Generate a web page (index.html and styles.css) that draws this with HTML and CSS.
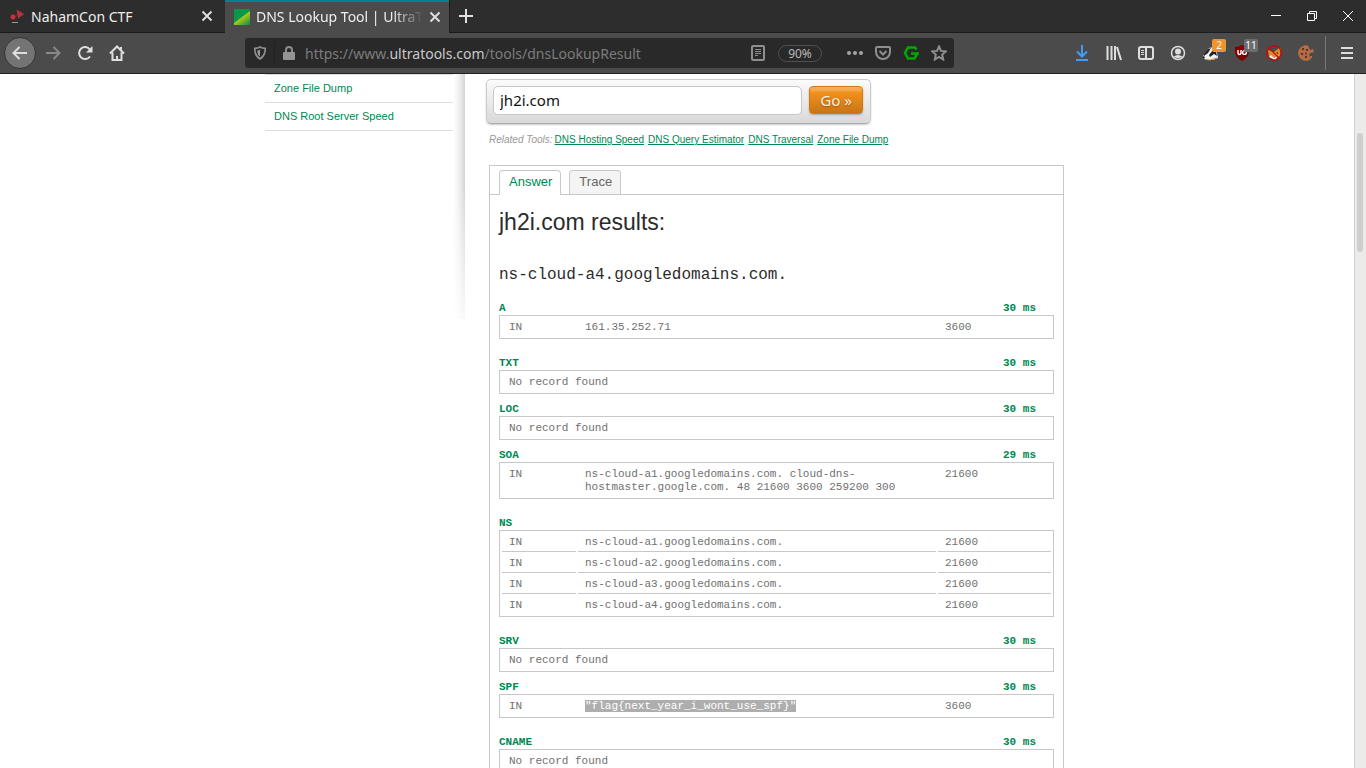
FILE: index.html
```html
<!DOCTYPE html>
<html lang="en">
<head>
<meta charset="utf-8">
<title>DNS Lookup Tool | UltraTools</title>
<link rel="stylesheet" href="styles.css">
</head>
<body>
<header class="browser">
  <div class="tabstrip">
    <div class="tab">
      <svg class="favicon" viewBox="0 0 16 16"><path d="M7.500 1.500L15 6l-6 4.500z" fill="#b8343c"/><circle cx="4" cy="9" r="2.500" fill="#c8323e"/><path d="M6 8l3-1" stroke="#822"/><path d="M3 14.500h6" stroke="#999"/></svg>
      <span class="tab-title">NahamCon CTF</span>
      <button class="bare" aria-label="Close NahamCon CTF"><svg class="close" viewBox="0 0 12 12"><path d="M1.500 1.500l9 9m0-9l-9 9"/></svg></button>
    </div>
    <div class="tab tab-current">
      <svg class="favicon" viewBox="0 0 16 16"><defs><linearGradient id="leaf" x1="0.300" y1="0.300" x2="0.900" y2="1"><stop offset="0" stop-color="#d4dc12"/><stop offset="0.300" stop-color="#a5c81c"/><stop offset="1" stop-color="#16903e"/></linearGradient></defs><path d="M0 0h16v16H0z" fill="#0a9648"/><path d="M0 14L16 2v14H0z" fill="url(#leaf)"/></svg>
      <span class="tab-title fade">DNS Lookup Tool | UltraT</span>
      <button class="bare" aria-label="Close DNS Lookup Tool"><svg class="close" viewBox="0 0 12 12"><path d="M1.500 1.500l9 9m0-9l-9 9"/></svg></button>
    </div>
    <button class="bare new-tab" aria-label="New tab"><svg class="s16" viewBox="0 0 16 16"><path d="M8 1v14M1 8h14" stroke="#e0e0e0" stroke-width="2"/></svg></button>
    <div class="window-buttons">
      <button class="bare" aria-label="Minimize"><svg class="s12" viewBox="0 0 12 12"><path d="M1 5.500h10" stroke="#fff"/></svg></button>
      <button class="bare" aria-label="Restore"><svg class="s12" viewBox="0 0 12 12"><path d="M1.500 3.500h7v7h-7zM3.500 3.500v-2h7v7h-2" stroke="#fff"/></svg></button>
      <button class="bare" aria-label="Close window"><svg class="s12" viewBox="0 0 12 12"><path d="M1 1l10 10M11 1L1 11" stroke="#fff"/></svg></button>
    </div>
  </div>
  <nav class="toolbar" aria-label="Browser toolbar">
    <div class="nav-buttons">
      <button class="bare back" aria-label="Back"><svg class="s16" viewBox="0 0 16 16"><path d="M15 8H2M7.500 2L1.500 8l6 6" class="bold"/></svg></button>
      <button class="bare dim" aria-label="Forward"><svg class="s16" viewBox="0 0 16 16"><path d="M1 8h13M8.500 2l6 6-6 6" class="bold"/></svg></button>
      <button class="bare" aria-label="Reload"><svg class="s16" viewBox="0 0 16 16"><path d="M13 11.500A6 6 0 1 1 13 4.500" class="bold"/><path d="M15.500 1v6.500H9z" fill="#dedede" stroke="none"/></svg></button>
      <button class="bare" aria-label="Home"><svg class="s16" viewBox="0 0 16 16"><path d="M1 8.500l7-7 7 7M3.500 7.500V15h9V7.500" class="bold"/><path d="M8 15v-4" class="bold"/><path d="M12 2v3" class="bold"/></svg></button>
    </div>
    <div class="urlbar">
      <svg class="s14" viewBox="0 0 14 16"><path d="M7 1.200C9 2.300 11 2.700 13 2.700c0 6-1 9.500-6 12-5-2.500-6-6-6-12 2 0 4-.4 6-1.500z" stroke-width="2"/><path d="M7 4v8C4.500 10.500 4 8 4 5 5 5 6 4.700 7 4z" fill="#999" stroke="none"/></svg>
      <span class="url-divider"></span>
      <svg class="s14 lock" viewBox="0 0 12 14"><path d="M3 7V4a3 3 0 0 1 6 0v3" stroke-width="2"/><rect y="6" width="12" height="8" rx="1" fill="#949494" stroke="none"/></svg>
      <p class="url">https://www.<span class="host">ultratools.com</span>/tools/dnsLookupResult</p>
      <button class="bare reader" aria-label="Reader view"><svg class="s16" viewBox="0 0 16 16"><rect x="2" y="1" width="12" height="14" rx="1" stroke-width="2"/><path d="M5 4.500h6M5 6.500h6M5 8.500h6M5 10.500h3"/></svg></button>
      <button class="zoom">90%</button>
      <div class="page-actions">
        <button class="bare" aria-label="Page actions"><svg class="s16" viewBox="0 0 16 16"><g fill="#a4a4a4" stroke="none"><circle cx="2" cy="8" r="2"/><circle cx="8" cy="8" r="2"/><circle cx="14" cy="8" r="2"/></g></svg></button>
        <button class="bare" aria-label="Save to Pocket"><svg class="s16" viewBox="0 0 16 16"><path d="M2 2h12q1 0 1 1v4a7 7 0 0 1-14 0V3q0-1 1-1z" stroke-width="2"/><path d="M4.500 6L8 9.500 11.500 6" stroke-width="2"/></svg></button>
        <button class="bare" aria-label="Grammar"><svg class="s16" viewBox="0 0 16 16"><path d="M13.500 4.500L12 2.500H5L2 8l3 5.500h6.500L14 9M16 8.500H8" stroke="#00a800" stroke-width="2.600"/></svg></button>
        <button class="bare" aria-label="Bookmark"><svg class="s16" viewBox="0 0 16 16"><path d="M8 1.500l2 4.400 4.800.5-3.600 3.200 1 4.900L8 12l-4.200 2.500 1-4.900L1.200 6.400 6 5.900z" stroke-width="2"/></svg></button>
      </div>
    </div>
    <div class="extensions">
      <button class="bare" aria-label="Downloads"><svg class="s16" viewBox="0 0 16 16"><path d="M8 0v11M3 6.500l5 5 5-5M2 15h12" stroke="#409cf5" stroke-width="2"/></svg></button>
      <button class="bare" aria-label="Library"><svg class="s16" viewBox="0 0 16 16"><path d="M1.500 1v14M5.500 1v14M9 1v14M11 2l4 13" stroke-width="2"/></svg></button>
      <button class="bare" aria-label="Sidebars"><svg class="s16" viewBox="0 0 16 16"><rect x="1" y="2" width="14" height="12" rx="2" stroke-width="2"/><path d="M8 2v12" stroke-width="2"/><path d="M3 5.500h3M3 7.500h3M3 9.500h3"/></svg></button>
      <button class="bare" aria-label="Account"><svg class="s16" viewBox="0 0 16 16"><circle cx="8" cy="8" r="6.500" stroke-width="1.500"/><circle cx="8" cy="6.500" r="3" fill="#dedede" stroke="none"/><path d="M3.500 11.500q4.500-3 9 0Q8 15 3.500 11.500z" fill="#dedede" stroke="none"/></svg></button>
      <button class="bare badged" aria-label="Privacy Badger"><svg class="s16" viewBox="0 0 16 16"><path d="M0 13L3 8l4-5 5-1 3 6 1 5-5 2H5z" fill="#f2f2f2" stroke="none"/><path d="M2 9l4-5 3-1-3 5-4 3z" fill="#222" stroke="none"/><path d="M7 10l4-5 3 2 1 4-3-2-4 3z" fill="#222" stroke="none"/><path d="M0 12l2-1 1 2-2 1z" fill="#222" stroke="none"/><path d="M4 14.500l4 .5 7-2" stroke="#c98c55"/></svg><span class="badge">2</span></button>
      <button class="bare badged" aria-label="uBlock Origin"><svg class="s16" viewBox="0 0 16 16"><path d="M8 0q3 2 7 2c0 7 0 10-7 14C1 12 1 9 1 2q4 0 7-2z" fill="#800000" stroke="none"/><path d="M4 5v3.500q1.500 2 3 0V5" stroke="#fff" stroke-width="1.400"/><circle cx="10.500" cy="7.500" r="1.900" stroke="#fff" stroke-width="1.400"/></svg><span class="badge badge-gray">11</span></button>
      <button class="bare" aria-label="FoxyProxy"><svg class="s16" viewBox="0 0 16 16"><path d="M2 5l3 1 3 1 5-4 2 1-1 7-5 3-6-2z" fill="#df882c" stroke="none"/><path d="M3 12l2-2 3 3 4-2-3 4z" fill="#eee" stroke="none"/><path d="M10 8l2-1v2z" fill="#5b2b10" stroke="none"/><circle cx="8" cy="8" r="7.200" stroke="#d40000" stroke-width="1.200"/><path d="M3 3l10 10" stroke="#d40000" stroke-width="1.200"/></svg></button>
      <button class="bare" aria-label="Cookies"><svg class="s16" viewBox="0 0 16 16"><path d="M10 0.500A7.800 7.800 0 1 0 13 14l-2-3 1-3 4-1-1-3-3 1z" fill="#b56d48" stroke="none"/><g fill="#6a3320" stroke="none"><circle cx="5" cy="4" r="1.200"/><circle cx="9" cy="5" r="1.200"/><circle cx="4" cy="9" r="1.300"/><circle cx="8" cy="12" r="1.200"/><circle cx="8" cy="8.500" r="1"/></g><path d="M12 11h2v2h-2z" fill="#b56d48" stroke="none"/></svg></button>
    </div>
    <button class="bare menu" aria-label="Menu"><svg class="s14" viewBox="0 0 14 14"><path d="M1 2h12M1 7h12M1 12h12" stroke-width="2"/></svg></button>
  </nav>
</header>

<div class="viewport">
  <div class="page">
    <aside class="side">
      <ul class="side-links">
        <li><a href="#">Zone File Dump</a></li>
        <li><a href="#">DNS Root Server Speed</a></li>
      </ul>
      <div class="side-shadow"></div>
    </aside>
    <main class="content">
      <form class="lookup">
        <input class="domain" type="text" value="jh2i.com" aria-label="Domain name">
        <button class="go" type="button">Go »</button>
      </form>
      <p class="related"><em>Related Tools:</em> <a href="#">DNS Hosting Speed</a> <a href="#">DNS Query Estimator</a> <a href="#">DNS Traversal</a> <a href="#">Zone File Dump</a></p>
      <section class="results">
        <div class="result-tabs">
          <button class="result-tab selected">Answer</button>
          <button class="result-tab">Trace</button>
        </div>
        <div class="records">
          <h1>jh2i.com results:</h1>
          <h2>ns-cloud-a4.googledomains.com.</h2>

          <h3>A <span>30 ms</span></h3>
          <table class="full">
            <tr><td class="c-class">IN</td><td>161.35.252.71</td><td class="c-ttl">3600</td></tr>
          </table>
          <h3>TXT <span>30 ms</span></h3>
          <table><tr><td>No record found</td></tr></table>
          <h3>LOC <span>30 ms</span></h3>
          <table><tr><td>No record found</td></tr></table>
          <h3>SOA <span>29 ms</span></h3>
          <table class="full">
            <tr><td class="c-class">IN</td><td>ns-cloud-a1.googledomains.com. cloud-dns-hostmaster.google.com. 48 21600 3600 259200 300</td><td class="c-ttl">21600</td></tr>
          </table>
          <h3>NS</h3>
          <table class="full">
            <tr><td class="c-class">IN</td><td>ns-cloud-a1.googledomains.com.</td><td class="c-ttl">21600</td></tr>
            <tr><td>IN</td><td>ns-cloud-a2.googledomains.com.</td><td>21600</td></tr>
            <tr><td>IN</td><td>ns-cloud-a3.googledomains.com.</td><td>21600</td></tr>
            <tr><td>IN</td><td>ns-cloud-a4.googledomains.com.</td><td>21600</td></tr>
          </table>
          <h3>SRV <span>30 ms</span></h3>
          <table><tr><td>No record found</td></tr></table>
          <h3>SPF <span>30 ms</span></h3>
          <table class="full">
            <tr><td class="c-class">IN</td><td><mark>"flag{next_year_i_wont_use_spf}"</mark></td><td class="c-ttl">3600</td></tr>
          </table>
          <h3>CNAME <span>30 ms</span></h3>
          <table><tr><td>No record found</td></tr></table>
        </div>
      </section>
    </main>
  </div>
  <div class="scrollbar"><div class="thumb"></div></div>
</div>
</body>
</html>
```
FILE: styles.css
```css
* { box-sizing: border-box; }
body {
  margin: 0;
  height: 100vh;
  display: flex;
  flex-direction: column;
  overflow: hidden;
  font-family: "Liberation Sans", Arial, sans-serif;
  background: #fff;
}
h1, h2, h3, p, ul { margin: 0; padding: 0; }
svg { display: block; flex: none; fill: none; stroke: #dedede; }
.s12 { width: 12px; height: 12px; }
.s14 { width: 14px; height: 14px; }
.s16 { width: 16px; height: 16px; }
.bold { stroke-width: 2; }
.bare {
  display: flex;
  align-items: center;
  justify-content: center;
  flex: none;
  padding: 0;
  border: 0;
  background: none;
}

/* Browser frame */
.browser {
  flex: none;
  font-family: "Noto Sans", sans-serif;
  font-size: 14px;
  color: #eee;
}
.tabstrip {
  display: flex;
  height: 33px;
  background: #2d2d2d;
  border-bottom: 1px solid #1c1c1c;
}
.tab {
  display: flex;
  align-items: center;
  flex: 0 1 225px;
  min-width: 0;
  gap: 6px;
  padding: 0 12px 0 9px;
}
.tab-current {
  height: 33px;
  background: #4b4b4b;
  border-right: 1px solid #1c1c1c;
  box-shadow: inset 0 2px #00868a;
  padding: 0 11px 0 9px;
}
.favicon { width: 16px; height: 16px; stroke: none; }
.tab-title { flex: 1; white-space: nowrap; }
.fade { mask-image: linear-gradient(to right, #000 82%, transparent); }
.close { width: 12px; height: 12px; stroke-width: 2; }
.new-tab { width: 32px; }
.window-buttons { display: flex; gap: 24px; margin-left: auto; padding-right: 12px; }
.toolbar {
  display: flex;
  align-items: center;
  height: 41px;
  padding: 0 12px 0 4px;
  background: #4b4b4b;
  border-bottom: 1px solid #222;
}
.nav-buttons { display: flex; align-items: center; gap: 16px; width: 241px; }
.back {
  width: 32px;
  height: 32px;
  border: 1px solid #333;
  border-radius: 50%;
  background: #747474;
}
.nav-buttons .back + .bare { margin-left: -7px; }
.dim svg { stroke: #888; }
.urlbar {
  display: flex;
  align-items: center;
  flex: 0 1 709px;
  min-width: 0;
  height: 30px;
  padding: 0 7px 0 8px;
  border-radius: 3px;
  background: #292929;
}
.urlbar svg { stroke: #8e8e8e; }
.url-divider { width: 1px; height: 22px; margin: 0 7px; background: #222; }
.url {
  flex: 1;
  overflow: hidden;
  margin-left: 9px;
  white-space: nowrap;
  color: #7c7c7c;
}
.host { color: #c8c8c8; }
.zoom {
  width: 44px;
  height: 17px;
  margin: 0 17px 0 12px;
  padding: 0;
  border: 1px solid #505050;
  border-radius: 9px;
  background: none;
  font: 12px/15px "Noto Sans", sans-serif;
  color: #b8b8b8;
}
.page-actions { display: flex; gap: 12px; padding-left: 8px; }
.extensions { display: flex; gap: 16px; margin-left: auto; padding-right: 11px; }
.badged { position: relative; }
.badge {
  position: absolute;
  top: -6px;
  left: 10px;
  width: 14px;
  border-radius: 2px;
  background: #f0952b;
  font: 10px/13px "Noto Sans", sans-serif;
  color: #fff;
}
.badge-gray { background: #6a6c6e; }
.menu { height: 34px; padding-left: 14px; border-left: 1px solid #777; }

/* Page */
.viewport { display: flex; flex: 1; min-height: 0; }
.page {
  display: flex;
  flex: 1;
  max-width: 824px;
  margin: 0 auto;
  overflow: hidden;
}
.scrollbar {
  width: 12px;
  height: 100%;
  padding: 59px 2px 0;
  border-left: 1px solid #d3d0cd;
  background: #edebea;
}
.thumb { width: 6px; height: 119px; border-radius: 3px; background: #cecece; }
.side { display: flex; flex: 0 0 200px; }
.side-links { flex: 1; list-style: none; border-top: 1px solid #ddd; align-self: flex-start; }
.side-links li { border-bottom: 1px solid #ddd; padding: 0 9px; font-size: 11px; line-height: 27px; }
.side-links a { color: #008752; text-decoration: none; }
.side-shadow {
  width: 12px;
  height: 245px;
  background: linear-gradient(to right, #fff, #f0f0f0 50%, #d4d4d4);
  mask-image: linear-gradient(#000 45%, rgba(0, 0, 0, 0.15));
}
.content { flex: 1; min-width: 0; padding: 5px 25px 0 21px; }
.lookup {
  display: flex;
  gap: 7px;
  width: 385px;
  max-width: 100%;
  height: 45px;
  padding: 6px;
  border: 1px solid #ccc;
  border-bottom-color: #aaa;
  border-radius: 5px;
  background: linear-gradient(#fbfbfb, #d9d9d9);
  box-shadow: 0 1px 2px #ccc;
}
.domain {
  flex: 1;
  min-width: 0;
  height: 29px;
  padding: 0 6px 2px;
  border: 1px solid #c8c8c8;
  border-radius: 5px;
  background: #fff;
  font: 15px "Noto Sans", sans-serif;
  color: #111;
}
.go {
  width: 54px;
  height: 28px;
  margin-right: 1px;
  padding: 0;
  border: 1px solid #d27812;
  border-radius: 4px;
  background: linear-gradient(#f5b062 0, #f3a54a 4px, #f2921d 5px, #c97516 100%);
  box-shadow: 0 1px 2px #aaa;
  font: 15px "Noto Sans", sans-serif;
  color: #fff2e0;
  text-shadow: 0 1px 2px #955000;
}
.related {
  display: flex;
  gap: 4px;
  margin: 8px 0 0 3px;
  font-size: 10px;
  line-height: 16px;
  white-space: nowrap;
  color: #999;
}
.related em { margin-right: -2px; }
.related a { color: #008752; text-decoration: underline; }
.results { margin: 17px 0 0 3px; border: 1px solid #c8c8c8; }
.result-tabs {
  display: flex;
  gap: 8px;
  height: 29px;
  padding: 4px 9px 0;
  border-bottom: 1px solid #c8c8c8;
}
.result-tab {
  height: 24px;
  padding: 0 8px 3px 9px;
  border: 1px solid #c8c8c8;
  border-bottom: 0;
  border-radius: 4px 4px 0 0;
  background: #f4f4f4;
  font: 13px "Liberation Sans", Arial, sans-serif;
  color: #666;
}
.selected { height: 25px; padding-bottom: 4px; background: #fff; color: #008752; }
.records { padding: 0 9px; font-family: "Liberation Mono", monospace; }
h1 {
  padding: 12px 0 28px;
  font: 23px/30px "Liberation Sans", Arial, sans-serif;
  color: #2b2b2b;
}
h2 { padding-bottom: 15px; font-size: 16px; font-weight: 400; line-height: 20px; color: #2b2b2b; }
h3 {
  display: flex;
  justify-content: space-between;
  height: 15px;
  padding-right: 18px;
  font-size: 11px;
  line-height: 16px;
  color: #008752;
}
table {
  width: 100%;
  margin-bottom: 7px;
  table-layout: fixed;
  border: 1px solid #c8c8c8;
  border-spacing: 2px;
}
.full { margin-bottom: 16px; }
td { padding: 3px 7px 2px; font-size: 11px; line-height: 13px; vertical-align: top; color: #707070; }
tr:not(:last-child) td { border-bottom: 1px solid #c8c8c8; }
.c-class { width: 74px; }
.c-ttl { width: 113px; }
mark { background: #aeaeae; color: #fff; }
```
